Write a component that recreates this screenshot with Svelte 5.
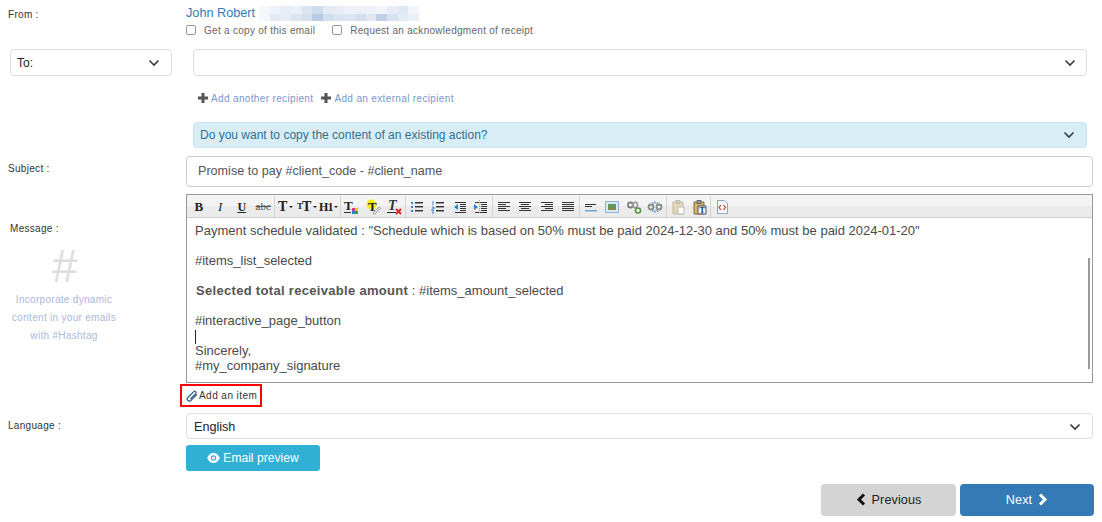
<script>
	const blurTop = ['#f4f7fb','#eef3f9','#e6edf6','#e9f0f8','#dbe5f2','#cfdcee','#e4ebf5','#e6edf6','#edf2f8','#eaf0f7','#eef3f9','#f0f4f9','#e6edf6','#dfe8f3','#f2f5fa']
	const blurBottom = ['#f4f7fb','#e2eaf4','#e6edf6','#dce6f2','#d5e0ef','#b9cbe3','#d3dfee','#dbe5f1','#dce6f2','#d3dfee','#dfe8f3','#bfcfe5','#d7e2f0','#e3ebf4','#eaf0f7']

	const lines = (rows) => rows.map(([x1, x2, y, c = '#333']) => `<path d="M${x1} ${y}.5H${x2}" stroke="${c}"/>`).join('')

	const clip = (faded) => `<g opacity="${faded ? 0.4 : 1}"><path d="M3 3h10v12H3z" fill="#d9b263" stroke="#8a6d2f"/><path d="M6 1.5h4v3H6z" fill="#999" stroke="#666"/></g>`

	const groups = [
		[
			{ text: 'B', cls: 'bold' },
			{ text: 'I', cls: 'ital' },
			{ text: 'U', cls: 'under' },
			{ text: 'abc', cls: 'strike' }
		],
		[
			{ text: 'T', cls: 'big', drop: true },
			{ text: 'T', pre: 'T', cls: 'big', drop: true },
			{ text: 'H1', cls: 'hone', drop: true }
		],
		[
			{ svg: `<text x="1" y="11" font-family="Liberation Serif" font-weight="700" font-size="13" fill="#222">T</text><path d="M1 13.5h7" stroke="#333"/><path d="M9 9h3v3H9z" fill="#d23b8a"/><path d="M12 9h3v3h-3z" fill="#e8c81c"/><path d="M9 12h3v3H9z" fill="#2f7fd0"/><path d="M12 12h3v3h-3z" fill="#3aa03a"/>` },
			{ svg: `<circle cx="6.500" cy="5.500" r="5" fill="#f6ee10"/><text x="3" y="12" font-family="Liberation Serif" font-weight="700" font-size="13" fill="#222">T</text><path d="M8 14l6-6 1.500 1.500-6 6z" fill="#ddd" stroke="#888" stroke-width=".7"/>` },
			{ svg: `<text x="2" y="11" font-family="Liberation Serif" font-style="italic" font-weight="700" font-size="14" fill="#333">T</text><path d="M1 13.500h9" stroke="#333"/><path d="M10 10l5 5m0-5l-5 5" stroke="#e02020" stroke-width="1.800"/>` }
		],
		[
			{ svg: `<path d="M2 3h2v2H2zM2 7h2v2H2zM2 11h2v2H2z" fill="#3f7fcf"/>` + lines([[6, 14, 3], [6, 14, 4, '#999'], [6, 14, 7], [6, 14, 8, '#999'], [6, 14, 11], [6, 14, 12, '#999']]) },
			{ svg: `<path d="M3 2v4M2 8h2v2H2v2h2M2 14h2" stroke="#3f7fcf" fill="none"/>` + lines([[6, 14, 3], [6, 14, 4, '#999'], [6, 14, 7], [6, 14, 8, '#999'], [6, 14, 11], [6, 14, 12, '#999']]) },
			{ svg: lines([[3, 14, 3], [8, 14, 5], [8, 14, 7], [8, 14, 9], [8, 14, 11], [3, 14, 13]]) + `<path d="M6 5L2 8l4 3z" fill="#2f7fd0"/>` },
			{ svg: lines([[2, 14, 3], [8, 14, 5], [8, 14, 7], [8, 14, 9], [8, 14, 11], [2, 14, 13]]) + `<path d="M1 5l4 3-4 3z" fill="#2f7fd0"/><path d="M6.500 1v14" stroke="#999" stroke-dasharray="1 1"/>` }
		],
		[
			{ svg: lines([[2, 14, 3], [2, 10, 5], [2, 14, 7], [2, 10, 9], [2, 14, 11]]) },
			{ svg: lines([[2, 14, 3], [4, 12, 5], [2, 14, 7], [4, 12, 9], [2, 14, 11]]) },
			{ svg: lines([[2, 14, 3], [6, 14, 5], [2, 14, 7], [6, 14, 9], [2, 14, 11]]) },
			{ svg: `<path d="M2 3h12v1H2zM2 5h12v1H2zM2 7h12v1H2zM2 9h12v1H2zM2 11h12v1H2z" fill="#333"/>` }
		],
		[
			{ svg: lines([[2, 13, 5], [2, 9, 7]]) + `<path d="M2 11h12v1.500H2z" fill="#6aa3dc"/>` },
			{ svg: `<path d="M1.500 2.500h13v11h-13z" fill="#dbe8f5" stroke="#8fb2d8"/><path d="M4 5h8v6H4z" fill="#5f9a5a"/><path d="M5 11l2-3 2 1 2 2z" fill="#a07a3a"/>` },
			{ svg: `<circle cx="4.500" cy="6" r="2.600" fill="none" stroke="#777" stroke-width="1.600"/><circle cx="9" cy="6" r="2.600" fill="none" stroke="#999" stroke-width="1.600"/><circle cx="12" cy="11.500" r="2.500" fill="#fff" stroke="#4a9a3a" stroke-width="1.600"/>` },
			{ svg: `<circle cx="4" cy="8" r="2.500" fill="none" stroke="#888" stroke-width="1.800"/><circle cx="12" cy="8" r="2.500" fill="none" stroke="#888" stroke-width="1.800"/><path d="M8 2v3M8 11v3M5 3l1.500 2M11 3L9.500 5M5 13l1.500-2M11 13l-1.500-2" stroke="#4f8fd8"/>` }
		],
		[
			{ svg: clip(true) + `<path d="M8 8h6v7H8z" fill="#fff" stroke="#bbb"/>` },
			{ svg: clip(false) + `<path d="M7 7h8v8H7z" fill="#eef3fa" stroke="#456"/><text x="8.500" y="14" font-family="Liberation Serif" font-weight="700" font-size="8" fill="#234">T</text>` }
		],
		[
			{ svg: `<path d="M3.500 1.500h7l3 3v10h-10z" fill="#fff" stroke="#8aa6c8"/><path d="M7 6L5 8.500 7 11M9.500 6l2 2.500-2 2.500" fill="none" stroke="#d03030" stroke-width="1.200"/>` }
		]
	]

	const body = [
		{ text: 'Payment schedule validated : "Schedule which is based on 50% must be paid 2024-12-30 and 50% must be paid 2024-01-20"' },
		{ blank: true },
		{ text: '#items_list_selected' },
		{ blank: true },
		{ strong: 'Selected total receivable amount', text: ' : #items_amount_selected' },
		{ blank: true },
		{ text: '#interactive_page_button' },
		{ caret: true },
		{ text: 'Sincerely,' },
		{ text: '#my_company_signature' }
	]
</script>

{#snippet chevron()}
	<svg class="chevron" width="12" height="8" viewBox="0 0 12 8"><path d="M1.500 1.500L6 6l4.500-4.500" fill="none" stroke="#343a40" stroke-width="1.600" /></svg>
{/snippet}

{#snippet plus()}
	<svg width="10" height="10" viewBox="0 0 10 10"><path d="M3.500 0h3v3.500H10v3H6.500V10h-3V6.500H0v-3h3.500z" fill="#555" /></svg>
{/snippet}

<div class="page">
	<div class="from">
		<div class="label from__label">From :</div>
		<div class="from__main">
			<div class="sender">
				<span class="sender__name">John Robert</span>
				<div class="blur">
					{#each [blurTop, blurBottom] as row}
						<div class="blur__row">
							{#each row as colour}
								<span style="background:{colour}"></span>
							{/each}
						</div>
					{/each}
				</div>
			</div>
			<div class="checks">
				<label><span class="box"></span>Get a copy of this email</label>
				<label><span class="box"></span>Request an acknowledgment of receipt</label>
			</div>
		</div>
	</div>

	<div class="to">
		<div class="select select--to"><span>To:</span>{@render chevron()}</div>
		<div class="select select--recipient">{@render chevron()}</div>
	</div>

	<div class="links">
		<a href="#a">{@render plus()}Add another recipient</a>
		<a href="#b">{@render plus()}Add an external recipient</a>
	</div>

	<div class="info"><span>Do you want to copy the content of an existing action?</span>{@render chevron()}</div>

	<div class="row row--subject">
		<div class="label label--subject">Subject :</div>
		<div class="subject">Promise to pay #client_code - #client_name</div>
	</div>

	<div class="row row--message">
		<div class="side">
			<div class="label label--message">Message :</div>
			<div class="hash">#</div>
			<p>Incorporate dynamic<br />content in your emails<br />with #Hashtag</p>
		</div>
		<div class="editor">
			<div class="toolbar">
				{#each groups as group, i}
					{#if i > 0}<span class="sep"></span>{/if}
					{#each group as tool}
						<span class="tool">
							{#if tool.svg}
								<svg width="16" height="16" viewBox="0 0 16 16">{@html tool.svg}</svg>
							{:else}
								{#if tool.pre}<span class="tool__pre">{tool.pre}</span>{/if}<span class={tool.cls}>{tool.text}</span>{#if tool.drop}<i class="drop"></i>{/if}
							{/if}
						</span>
					{/each}
				{/each}
			</div>
			<div class="content">
				{#each body as line}
					<div class="line">
						{#if line.blank}
							&nbsp;
						{:else if line.caret}
							<span class="caret"></span>
						{:else}
							{#if line.strong}<strong>{line.strong}</strong>{/if}{line.text}
						{/if}
					</div>
				{/each}
				<span class="scroll"></span>
			</div>
		</div>
	</div>

	<div class="attach">
		<button class="attach__btn">
			<svg width="12" height="12" viewBox="0 0 12 12"><path d="M10.800 4.500L5 10.300a2 2 0 0 1-3.200-2.800L7.500 1.800a1.400 1.400 0 0 1 2.200 1.900L4.300 9" fill="none" stroke="#2d5f80" stroke-width="1.200" /></svg>
			Add an item
		</button>
	</div>

	<div class="row row--language">
		<div class="label label--language">Language :</div>
		<div class="select select--language"><span>English</span>{@render chevron()}</div>
	</div>

	<div class="preview">
		<button class="preview__btn">
			<svg width="13" height="10" viewBox="0 0 14 11"><path fill-rule="evenodd" d="M7 0c3 0 5.500 2 7 5.500-1.500 3.500-4 5.500-7 5.500S1.500 9 0 5.500C1.500 2 4 0 7 0zm0 2.600a2.900 2.900 0 1 0 0 5.800 2.900 2.900 0 0 0 0-5.800z" fill="#fff" /><circle cx="7" cy="5.500" r="1.700" fill="#fff" /></svg>
			Email preview
		</button>
	</div>

	<div class="nav">
		<button class="nav__btn nav__btn--prev">
			<svg width="10" height="13" viewBox="0 0 10 13"><path d="M8 1.500L3 6.500l5 5" fill="none" stroke="#111" stroke-width="3" /></svg>
			Previous
		</button>
		<button class="nav__btn nav__btn--next">
			Next
			<svg width="10" height="13" viewBox="0 0 10 13"><path d="M2 1.500l5 5-5 5" fill="none" stroke="#fff" stroke-width="3" /></svg>
		</button>
	</div>
</div>

<style>
	:global(body) {
		margin: 0;
		background: #fff;
	}

	.page {
		width: 1102px;
		height: 522px;
		overflow: hidden;
		font-family: "Liberation Sans", Arial, sans-serif;
		color: #333;
		box-sizing: border-box;
	}

	.label {
		font-size: 10px;
		letter-spacing: 0.3px;
		color: #333;
	}

	.from {
		display: flex;
		padding-top: 5px;
		height: 44px;
		box-sizing: border-box;
	}

	.from__label {
		width: 186px;
		padding: 4px 0 0 8px;
		box-sizing: border-box;
	}

	.sender {
		display: flex;
		align-items: flex-start;
		gap: 4px;
		height: 17px;
	}

	.sender__name {
		font-size: 12.700px;
		color: #337ab7;
		line-height: 16px;
	}

	.blur {
		display: flex;
		flex-direction: column;
		margin-top: 1px;
	}

	.blur__row {
		display: flex;
	}

	.blur__row span {
		width: 10.67px;
		height: 7.500px;
	}

	.checks {
		display: flex;
		gap: 17px;
		font-size: 10px;
		letter-spacing: 0.28px;
		color: #666;
	}

	.checks label {
		display: flex;
		align-items: center;
		gap: 8px;
		height: 16px;
	}

	.box {
		width: 8px;
		height: 8px;
		border: 1px solid #999;
		border-radius: 2px;
		background: #fff;
	}

	.select {
		display: flex;
		align-items: center;
		justify-content: space-between;
		box-sizing: border-box;
		border: 1px solid #ddd;
		border-radius: 4px;
		background: #fff;
		font-size: 12px;
		color: #212529;
	}

	.to {
		display: flex;
		gap: 21px;
		padding-left: 10px;
		margin-top: 5px;
	}

	.select--to {
		width: 162px;
		height: 27px;
		padding: 0 11px 0 6px;
	}

	.select--recipient {
		width: 894px;
		height: 27px;
		padding: 0 10px 0 6px;
		justify-content: flex-end;
	}

	.links {
		display: flex;
		gap: 8px;
		margin-top: 15px;
		padding-left: 198px;
		height: 14px;
		align-items: center;
	}

	.links a {
		display: flex;
		align-items: center;
		gap: 3px;
		font-size: 10px;
		letter-spacing: 0.35px;
		color: #7a97d0;
		text-decoration: none;
	}

	.info {
		display: flex;
		align-items: center;
		justify-content: space-between;
		box-sizing: border-box;
		width: 894px;
		height: 26px;
		margin: 17px 0 0 193px;
		padding: 0 11px 0 6px;
		background: #d9edf7;
		border: 1px solid #c9e6f1;
		border-radius: 4px;
		font-size: 12px;
		color: #31708f;
	}

	.row {
		display: flex;
	}

	.row--subject {
		margin-top: 8px;
	}

	.label--subject {
		width: 186px;
		padding: 7px 0 0 8px;
		box-sizing: border-box;
	}

	.subject {
		box-sizing: border-box;
		width: 907px;
		height: 31px;
		padding: 0 11px;
		border: 1px solid #ccc;
		border-radius: 4px;
		font-size: 12.600px;
		line-height: 29px;
		color: #555;
	}

	.row--message {
		margin-top: 7px;
		height: 189px;
	}

	.side {
		width: 186px;
		box-sizing: border-box;
	}

	.label--message {
		padding: 29px 0 0 10px;
	}

	.hash {
		width: 128px;
		text-align: center;
		font-size: 46px;
		line-height: 42px;
		font-style: italic;
		color: #ddd;
		margin-top: 11px;
	}

	.side p {
		width: 128px;
		margin: 4px 0 0;
		text-align: center;
		font-size: 10px;
		line-height: 18px;
		letter-spacing: 0.3px;
		color: #aab7de;
	}

	.editor {
		box-sizing: border-box;
		width: 907px;
		border: 1px solid #999;
		display: flex;
		flex-direction: column;
	}

	.toolbar {
		display: flex;
		align-items: center;
		height: 23px;
		padding: 1px 0 0 1px;
		box-sizing: border-box;
		background: linear-gradient(#f4f4f4 0 11px, #ebebeb 11px);
		border-bottom: 1px solid #ccc;
	}

	.tool {
		display: flex;
		align-items: center;
		justify-content: center;
		width: 21.500px;
		height: 21px;
		font-family: "Liberation Serif", serif;
		color: #222;
		line-height: 1;
	}

	.sep {
		width: 1px;
		height: 21px;
		background: #d4d4d4;
	}

	.bold {
		font-weight: 700;
		font-size: 13px;
	}

	.ital {
		font-style: italic;
		font-size: 13px;
	}

	.under {
		font-weight: 700;
		text-decoration: underline;
		font-size: 12px;
	}

	.strike {
		text-decoration: line-through;
		font-size: 11px;
		color: #555;
	}

	.big {
		font-weight: 700;
		font-size: 14px;
	}

	.tool__pre {
		font-size: 9px;
		font-weight: 700;
		margin-right: -1px;
	}

	.hone {
		font-weight: 700;
		font-size: 12px;
		letter-spacing: -1px;
	}

	.drop {
		margin-left: 2px;
		border-left: 2px solid transparent;
		border-right: 2px solid transparent;
		border-top: 2px solid #222;
	}

	.content {
		position: relative;
		flex: 1;
		padding: 5px 8px 3px;
		font-size: 13px;
		line-height: 15px;
		color: #4a4a4a;
		overflow: hidden;
	}

	.content strong {
		margin-left: 1px;
		letter-spacing: 0.31px;
		color: #555;
	}

	.line {
		height: 15px;
		white-space: nowrap;
	}

	.caret {
		display: inline-block;
		width: 1px;
		height: 14px;
		background: #222;
		vertical-align: middle;
	}

	.scroll {
		position: absolute;
		right: 2px;
		top: 40px;
		width: 2px;
		height: 111px;
		background: #999;
	}

	.attach {
		height: 30px;
		padding: 1px 0 0 180px;
		box-sizing: border-box;
	}

	.attach__btn {
		display: flex;
		align-items: center;
		gap: 1px;
		box-sizing: border-box;
		width: 82px;
		height: 23px;
		padding: 0 0 0 4px;
		border: 2px solid #f00;
		background: #fff;
		font-family: inherit;
		font-size: 10px;
		letter-spacing: 0.45px;
		color: #333;
	}

	.row--language {
		height: 26px;
	}

	.label--language {
		width: 186px;
		padding: 7px 0 0 8px;
		box-sizing: border-box;
	}

	.select--language {
		width: 907px;
		height: 26px;
		padding: 1px 11px 0 7px;
		font-size: 12.600px;
	}

	.preview {
		padding: 6px 0 0 186px;
		height: 26px;
	}

	.preview__btn {
		display: flex;
		align-items: center;
		justify-content: center;
		gap: 3px;
		width: 134px;
		height: 26px;
		padding: 0;
		border: 0;
		border-radius: 3px;
		background: #31b0d5;
		font-family: inherit;
		font-size: 12px;
		letter-spacing: 0.05px;
		color: #fff;
	}

	.nav {
		display: flex;
		justify-content: flex-end;
		gap: 4px;
		padding: 13px 8px 0 0;
	}

	.nav__btn {
		display: flex;
		align-items: center;
		justify-content: center;
		gap: 6px;
		width: 134px;
		height: 32px;
		padding: 0 0 1px;
		border: 0;
		border-radius: 4px;
		font-family: inherit;
		font-size: 12.600px;
		letter-spacing: 0.1px;
	}

	.nav__btn--prev {
		width: 135px;
		background: #d4d4d4;
		color: #222;
	}

	.nav__btn--next {
		background: #337ab7;
		color: #fff;
	}
</style>
